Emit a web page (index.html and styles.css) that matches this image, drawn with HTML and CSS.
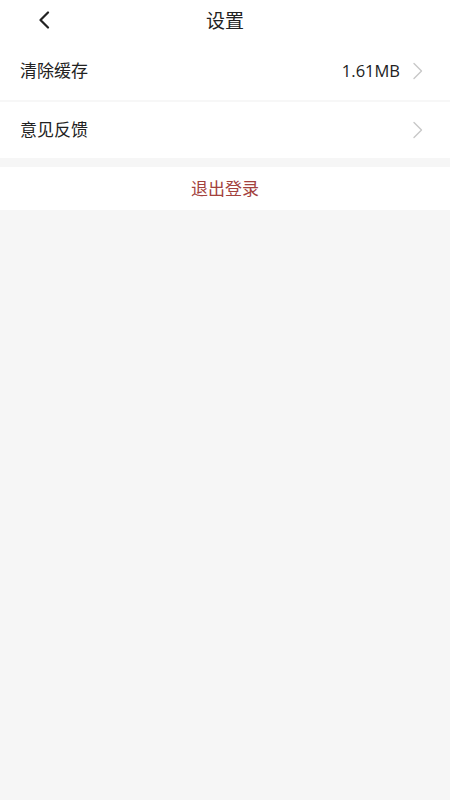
FILE: index.html
```html
<!DOCTYPE html>
<html lang="zh">
<head>
<meta charset="utf-8">
<link rel="stylesheet" href="styles.css">
</head>
<body>
<div class="page">
  <header class="topbar">
    <span class="back">
      <svg width="14" height="18" viewBox="0 0 14 18"><path d="M11 1.5 L3.5 9 L11 16.5" fill="none" stroke="#222" stroke-width="2.2" stroke-linecap="round" stroke-linejoin="round"/></svg>
    </span>
    <h1 class="title">设置</h1>
  </header>
  <section class="group">
    <div class="row row-first">
      <span class="label">清除缓存</span>
      <span class="right"><span class="value">1.61MB</span>
        <svg class="chev" width="12" height="18" viewBox="0 0 12 18"><path d="M2 1.5 L9.5 9 L2 16.5" fill="none" stroke="#c8c8c8" stroke-width="1.4" stroke-linecap="round" stroke-linejoin="round"/></svg>
      </span>
    </div>
    <div class="divider"></div>
    <div class="row row-second">
      <span class="label">意见反馈</span>
      <span class="right">
        <svg class="chev" width="12" height="18" viewBox="0 0 12 18"><path d="M2 1.5 L9.5 9 L2 16.5" fill="none" stroke="#c8c8c8" stroke-width="1.4" stroke-linecap="round" stroke-linejoin="round"/></svg>
      </span>
    </div>
  </section>
  <div class="logout"><span class="logout-text">退出登录</span></div>
</div>
</body>
</html>
```

FILE: styles.css
```css
html, body {
  margin: 0;
  padding: 0;
  background: #f6f6f6;
  font-family: "Noto Sans CJK SC", "Noto Sans", sans-serif;
}
.page {
  width: 450px;
  min-height: 800px;
  background: #f6f6f6;
}
.topbar {
  height: 42px;
  background: #fff;
  display: flex;
  align-items: center;
  justify-content: center;
  position: relative;
}
.back {
  position: absolute;
  left: 37px;
  top: 11px;
  display: flex;
}
.title {
  margin: 0;
  font-size: 19px;
  font-weight: 400;
  color: #222;
  line-height: 1;
  margin-top: -4px;
}
.group {
  background: #fff;
}
.row {
  display: flex;
  align-items: center;
  justify-content: space-between;
  padding: 0 26px 0 20px;
}
.row-first {
  height: 58px;
}
.row-second {
  height: 56px;
}
.divider {
  height: 2px;
  background: #f7f7f7;
}
.label {
  font-size: 17px;
  color: #222;
  padding-bottom: 3px;
}
.right {
  display: flex;
  align-items: center;
  gap: 12px;
}
.value {
  font-family: "Open Sans", "Noto Sans", sans-serif;
  font-size: 16.5px;
  color: #222;
  padding-bottom: 1px;
}
.chev {
  display: block;
}
.logout {
  margin-top: 9px;
  height: 43px;
  background: #fff;
  display: flex;
  align-items: center;
  justify-content: center;
}
.logout-text {
  font-size: 17px;
  color: #a3423e;
  padding-bottom: 3px;
}
```
